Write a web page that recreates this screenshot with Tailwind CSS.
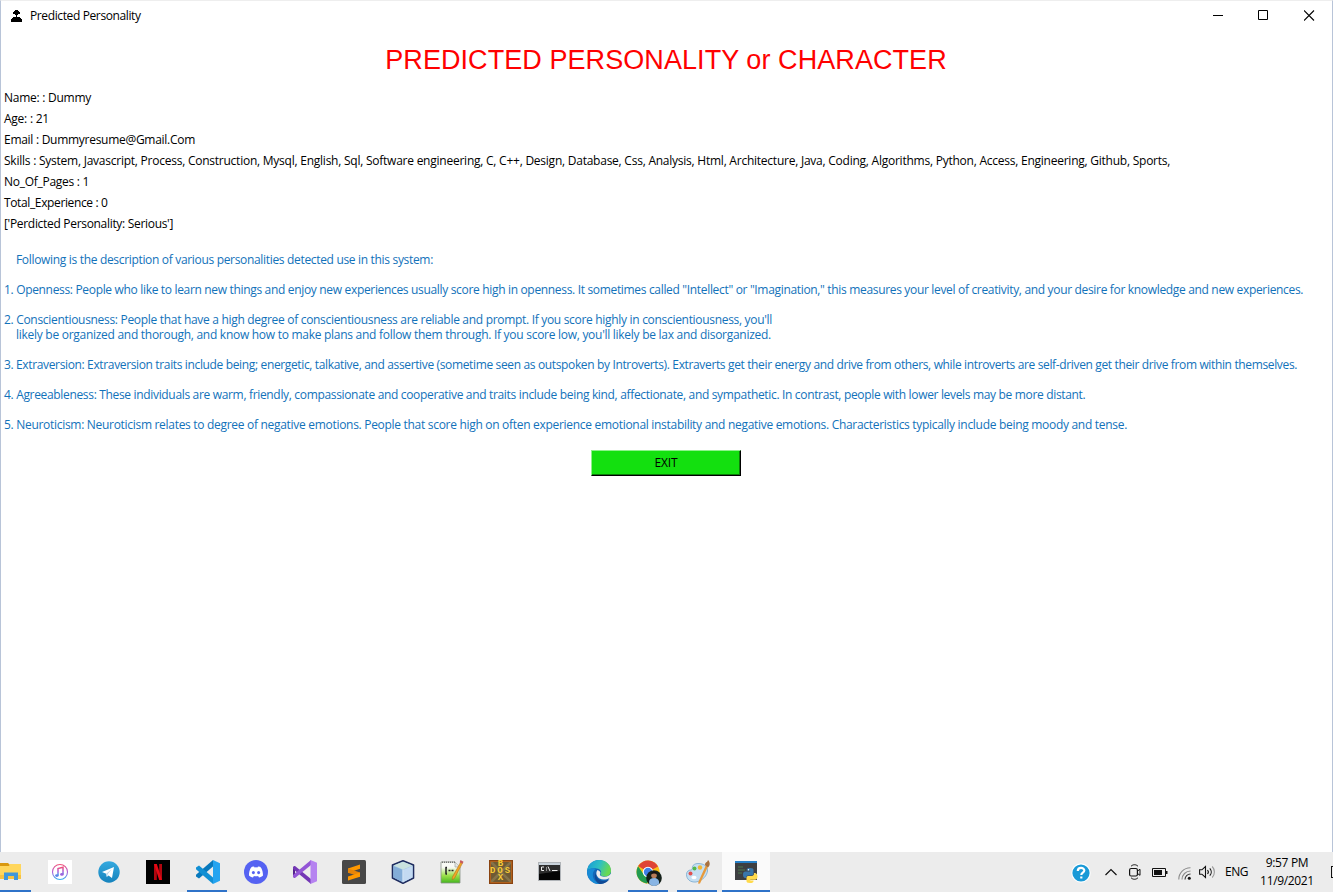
<!DOCTYPE html>
<html lang="en">
<head>
<meta charset="utf-8">
<title>Predicted Personality</title>
<script src="https://cdn.jsdelivr.net/npm/@tailwindcss/browser@4"></script>
</head>
<body class="w-[1333px] h-[892px] overflow-hidden bg-white font-['Open_Sans','Noto_Sans',sans-serif] text-[12px] text-black">
<div class="flex flex-col h-[892px]">
  <main class="flex flex-col h-[852px] border-t border-t-[#eee] border-x border-x-[#b8c4d8] whitespace-nowrap">
    <header class="flex items-center h-[30px] pl-[10px] shrink-0">
      <svg class="w-[11px] h-3 shrink-0 mb-px" viewBox="0 0 11 12" shape-rendering="crispEdges"><path d="M4 0h3v1h1v1h1v2H7v1H6v2h3v1h1v1h1v3H0V9h1V8h1V7h3V5H4V4H2V2h1V1h1z"/></svg>
      <span class="ml-2 tracking-[-0.38px]">Predicted Personality</span>
      <div class="flex items-center ml-auto mr-[17px] gap-[35px] mb-0.5">
        <svg class="w-[11px] h-[11px]" viewBox="0 0 11 11" fill="none" stroke="#000"><path d="M1 5.5h10"/></svg>
        <svg class="w-[11px] h-[11px]" viewBox="0 0 11 11" fill="none" stroke="#000"><path d="M.5.5h9v9h-9z"/></svg>
        <svg class="w-[11px] h-[11px]" viewBox="0 0 11 11" fill="none" stroke="#000" stroke-width="1.1"><path d="M0 .5l10 10M10 .5l-10 10"/></svg>
      </div>
    </header>
    <h1 class="mt-[11px] h-9 leading-9 shrink-0 pr-px text-center text-[27px] tracking-[0.07px] text-[#f00] font-['Liberation_Sans',sans-serif]">PREDICTED PERSONALITY or CHARACTER</h1>
    <section class="mt-[9px] pl-[3px] leading-[21px]">
      <p class="tracking-[-0.26px]">Name: : Dummy</p>
      <p class="tracking-[-0.24px]">Age: : 21</p>
      <p class="tracking-[-0.28px]">Email : Dummyresume@Gmail.Com</p>
      <p class="tracking-[-0.24px]">Skills : System, Javascript, Process, Construction, Mysql, English, Sql, Software engineering, C, C++, Design, Database, Css, Analysis, Html, Architecture, Java, Coding, Algorithms, Python, Access, Engineering, Github, Sports,</p>
      <p class="tracking-[-0.28px]">No_Of_Pages : 1</p>
      <p class="tracking-[-0.37px]">Total_Experience : 0</p>
      <p class="tracking-[-0.31px]">['Perdicted Personality: Serious']</p>
    </section>
    <section class="mt-[18px] pl-[3px] flex flex-col gap-[15px] leading-[15px] text-[#1272ba]">
      <p class="pl-3 tracking-[-0.323px]">Following is the description of various personalities detected use in this system:</p>
      <p class="tracking-[-0.327px]">1. Openness: People who like to learn new things and enjoy new experiences usually score high in openness. It sometimes called "Intellect" or "Imagination," this measures your level of creativity, and your desire for knowledge and new experiences.</p>
      <div>
        <p class="tracking-[-0.307px]">2. Conscientiousness: People that have a high degree of conscientiousness are reliable and prompt. If you score highly in conscientiousness, you'll</p>
        <p class="pl-3 tracking-[-0.277px]">likely be organized and thorough, and know how to make plans and follow them through. If you score low, you'll likely be lax and disorganized.</p>
      </div>
      <p class="tracking-[-0.356px]">3. Extraversion: Extraversion traits include being; energetic, talkative, and assertive (sometime seen as outspoken by Introverts). Extraverts get their energy and drive from others, while introverts are self-driven get their drive from within themselves.</p>
      <p class="tracking-[-0.33px]">4. Agreeableness: These individuals are warm, friendly, compassionate and cooperative and traits include being kind, affectionate, and sympathetic. In contrast, people with lower levels may be more distant.</p>
      <p class="tracking-[-0.298px]">5. Neuroticism: Neuroticism relates to degree of negative emotions. People that score high on often experience emotional instability and negative emotions. Characteristics typically include being moody and tense.</p>
    </section>
    <button class="mt-[18px] ml-[590px] w-[150px] h-[26px] shrink-0 bg-[#13e00f] border border-t-[#8cf28a] border-l-[#8cf28a] border-b-black border-r-black shadow-[inset_-1px_-1px_0_#0b7d09] leading-6 tracking-[-0.15px]">EXIT</button>
  </main>

  <footer class="flex h-10 shrink-0 bg-[#ececec]">
    <nav class="flex -ml-[14px] shrink-0">
      <div class="w-[45px] pl-[5px] flex justify-center items-center border-b-2 border-[#2f73c9]">
        <svg class="w-6 h-6 mt-0.5" viewBox="0 0 24 24"><path d="M1 3h8l2 2v3H1z" fill="#d9980f"/><path d="M1 6h9l1-2h11v15H1z" fill="#ffd65c"/><path d="M1 15h21v4H1z" fill="#f7c342"/><path d="M5 12.500h14V20h-4v-4H9v4H5z" fill="#3f97db"/></svg>
      </div>
      <div class="w-[49px] ml-1 flex justify-center items-center">
        <svg class="w-6 h-6 bg-white" viewBox="0 0 24 24" fill="none"><defs><linearGradient id="it" x1="0" y1="0" x2="0" y2="1"><stop stop-color="#f0527c"/><stop offset=".5" stop-color="#b05cd8"/><stop offset="1" stop-color="#35aef0"/></linearGradient></defs><circle cx="12" cy="12" r="7.500" stroke="url(#it)" stroke-width="1.100"/><path d="M10 15.500V8.500l5-1.200v7" stroke="url(#it)" stroke-width="1.500"/><ellipse cx="8.900" cy="15.600" rx="1.800" ry="1.400" fill="#5a86e8"/><ellipse cx="13.900" cy="14.400" rx="1.800" ry="1.400" fill="#9b62dc"/></svg>
      </div>
      <div class="w-[49px] flex justify-center items-center">
        <svg class="w-6 h-6" viewBox="0 0 24 24"><defs><linearGradient id="tg" x1="0" y1="0" x2="0" y2="1"><stop stop-color="#35a9df"/><stop offset="1" stop-color="#1583bd"/></linearGradient></defs><circle cx="12" cy="12" r="10.700" fill="url(#tg)"/><path d="M5 12l12-5-2 11-3.500-2.600-1.800 1.700-.5-3.400z" fill="#fff"/><path d="M9.200 13.700L14.800 9l-4 5-.6 2.500z" fill="#b8d6ea"/></svg>
      </div>
      <div class="w-[49px] flex justify-center items-center">
        <svg class="w-6 h-6 bg-black" viewBox="0 0 24 24"><path d="M8 4h2.800v16H8zM13.200 4H16v16h-2.800z" fill="#b1060f"/><path d="M8 4h2.800L16 20h-2.800z" fill="#e50914"/></svg>
      </div>
      <div class="w-[49px] flex justify-center items-center relative">
        <svg class="w-6 h-6 ml-0.5" viewBox="0 0 24 24"><path d="M17 0L24 3.200V20.800L17 24z" fill="#25a4f0"/><path d="M17 0v6.500L3 18.500 0 16.500v-1.800z" fill="#0879bd"/><path d="M17 24v-6.500L3 5.500 0 7.500v1.800z" fill="#118fd4"/></svg>
        <i class="absolute bottom-0 left-[5px] w-10 h-0.5 bg-[#2f73c9]"></i>
      </div>
      <div class="w-[49px] flex justify-center items-center">
        <svg class="w-6 h-6" viewBox="0 0 24 24"><circle cx="12" cy="12" r="12" fill="#5562f2"/><path d="M8 6.800l2-.4.6 1a10 10 0 0 1 2.800 0l.6-1 2 .4c1.600 1 3 4.500 3 8.600-1 1.100-2.500 1.800-4 2l-.9-1.500a8 8 0 0 1-4.200 0L9 17.400c-1.500-.2-3-.9-4-2 0-4.100 1.400-7.600 3-8.600z" fill="#fff"/><ellipse cx="9.400" cy="12.600" rx="1.500" ry="1.700" fill="#5562f2"/><ellipse cx="14.600" cy="12.600" rx="1.500" ry="1.700" fill="#5562f2"/></svg>
      </div>
      <div class="w-[49px] flex justify-center items-center">
        <svg class="w-6 h-6" viewBox="0 0 24 24"><path d="M0 7l2-1v12l-2-1z" fill="#52218a"/><path d="M2 6l16 13v5L0 9V7z" fill="#7337b5"/><path d="M2 18L18 5V0L0 15v2z" fill="#9355d6"/><path d="M17.500 0L24 2.800V21.200L17.500 24z" fill="#b683f0"/></svg>
      </div>
      <div class="w-[49px] flex justify-center items-center">
        <svg class="w-6 h-6" viewBox="0 0 24 24"><rect width="24" height="24" rx="1.500" fill="#474747"/><path d="M6 8.500L18 4.500v4.300L6 12.800z" fill="#ff9800"/><path d="M6 8.500l12 3.900v4.300L6 12.800z" fill="#e88508"/><path d="M6 16.400l12-4v4.300L6 20.500z" fill="#ff9800"/></svg>
      </div>
      <div class="w-[49px] flex justify-center items-center">
        <svg class="w-6 h-6" viewBox="0 0 24 24" stroke="#1d2b5e" stroke-linejoin="round"><path d="M12 .8L22.500 5v13L12 23.300 1.500 18V5z" fill="#a9c8e6" stroke-width="1.600"/><g stroke="none"><path d="M12 1.700L21.500 5.500 12 9.500 2.500 5.500z" fill="#c9e2df"/><path d="M2.400 6L11.500 9.800v12.300L2.400 17.500z" fill="#83add8"/><path d="M12.500 9.800L21.600 6v11.500l-9.100 4.600z" fill="#c3daf2"/></g><path d="M12 9.500v13" stroke="#eaf4ff" stroke-width=".8"/></svg>
      </div>
      <div class="w-[49px] flex justify-center items-center">
        <svg class="w-6 h-6" viewBox="0 0 24 24"><defs><linearGradient id="np" x1="0" y1="0" x2="0" y2="1"><stop offset=".25" stop-color="#f8faf5"/><stop offset=".65" stop-color="#9be04a"/><stop offset="1" stop-color="#43b51e"/></linearGradient></defs><path d="M1 2h14l5 5v16H1z" fill="url(#np)" stroke="#8a948a" stroke-width=".8"/><path d="M15 2v5h5" fill="#e4e7e4" stroke="#a4a8a4" stroke-width=".7"/><path d="M2 2.200h13" stroke="#777" stroke-width="1.500" stroke-dasharray="1 1"/><path d="M6 7v7M8.500 10.500h2M11.500 10.500h2M5.500 7.500H7M5.500 14H7" stroke="#222" stroke-width="1.500"/><path d="M21 1.500l1.800 1-8.300 15.800-2.300 1.500.2-2.700z" fill="#f0a627" stroke="#a96a18" stroke-width=".5"/><path d="M20.500 0l3 1.700-1.200 2-2.600-1.500z" fill="#c85a60"/></svg>
      </div>
      <div class="w-[49px] flex justify-center items-center">
        <div class="relative w-6 h-6 bg-[#6e5a34] border border-[#8a4310] font-['Liberation_Mono',monospace] font-bold text-[9px] leading-[7px] text-[#f7cb36] text-center">
          <svg class="absolute inset-0 w-full h-full" viewBox="0 0 22 22"><path d="M1 1l20 20M21 1L1 21" stroke="#85734a" stroke-width="2.500"/><path d="M.5.500h21v21H.5z" fill="none" stroke="#b0601c"/></svg>
          <div class="relative flex flex-col"><span>B</span><span class="tracking-[2px] -mr-[2px] -ml-px">DOS</span><span>X</span></div>
        </div>
      </div>
      <div class="w-[49px] flex justify-center items-center">
        <svg class="w-6 h-6" viewBox="0 0 24 24"><path d="M.5 2.500h22v18H.5z" fill="#050505" stroke="#b0b4b8"/><path d="M1 3h21v2H1z" fill="#c9d3dc"/><path d="M1 5h21v6L1 14z" fill="#2d2d2d"/><path d="M6 7H3.500v3.500H6M8.500 7.500v1M8.500 9.500v1M10 6.500l2 4.500M14 10.500h5.500" fill="none" stroke="#eee"/></svg>
      </div>
      <div class="w-[49px] flex justify-center items-center">
        <svg class="w-6 h-6" viewBox="0 0 24 24"><defs><linearGradient id="ed" x1="0" y1="0" x2="1" y2=".3"><stop stop-color="#1599d8"/><stop offset=".55" stop-color="#2dbfc4"/><stop offset="1" stop-color="#68d952"/></linearGradient></defs><circle cx="12" cy="12" r="12" fill="#1268b8"/><path d="M0 11C1 4 6 0 12 0c7 0 12 5 12 10.500 0 4-3 6-6 6-3.500 0-5-1.200-4.500-2.300 1.500-1.800.5-5.200-4-5.700C5 8 1.500 9 0 11z" fill="url(#ed)"/><path d="M0 11c2-2.500 6-3.500 9-2-4 2-4.500 9 0 12.500 1.500 1.300 3 2 5 2.300C6 25 0 19 0 11z" fill="#178ad6"/><path d="M10.500 10c-3 3.500 0 9.500 6 9.500 2.500 0 4.500-.5 6.500-1.800L24 19v-5.500c-1 2-3.500 3.200-6 3.200-3.500 0-5.500-1.200-5-2.500.9-1.300.5-3.200-2.500-4.200z" fill="#ececec"/><path d="M9 12.500c-1 4 2.500 8.500 8 8.500 2 0 4-.8 5.500-2-2 3.500-6 5.200-10 5C8 22 6.500 16 9 12.500z" fill="#104a96"/></svg>
      </div>
      <div class="w-[49px] ml-px flex justify-center items-center relative">
        <svg class="w-[26px] h-[26px] mt-0.5" viewBox="0 0 26 26"><circle cx="12" cy="12" r="11.500" fill="#fbc116"/><path d="M12 12L2.200 6A11.500 11.500 0 0 1 22 6.500z" fill="#df4435"/><path d="M2.100 6.200A11.500 11.500 0 0 0 11 23.500L15 16 7.500 14z" fill="#229b50"/><circle cx="12" cy="12" r="5.300" fill="#fff"/><circle cx="12" cy="12" r="4.200" fill="#3f7fe8"/><circle cx="18" cy="18" r="7.800" fill="#14201a"/><path d="M13.500 24.300c-1.500-4 1-6.300 4.500-6.300s6 2.500 4.800 6a7.800 7.800 0 0 1-9.300.3z" fill="#89b5e4"/><circle cx="18" cy="15.500" r="2.800" fill="#b77c58"/><path d="M15 14.500c0-4 6-4 6 0-1.500-1.300-4-1.300-6 0z" fill="#17110f"/></svg>
        <i class="absolute bottom-0 left-1 w-10 h-0.5 bg-[#2f73c9]"></i>
      </div>
      <div class="w-[49px] flex justify-center items-center relative">
        <svg class="w-6 h-6" viewBox="0 0 24 24"><path d="M12 3.500c6 0 10 3 9.500 7.500S17 20.500 10 22C4 22.500.5 19 .5 14.500c0-3 2-4.500 4.500-4.500 2 0 1-2 1.500-3.500S9 3.500 12 3.500z" fill="#c5dff2" stroke="#76a8cf" stroke-width=".8"/><circle cx="4.500" cy="13.500" r="2" fill="#e2504f"/><circle cx="8.500" cy="8.500" r="2" fill="#53b94c"/><circle cx="14" cy="7.500" r="2.200" fill="#f2b634"/><ellipse cx="8" cy="17.500" rx="2.600" ry="1.700" fill="#fff"/><path d="M20 5l2 1.500-8 17-1.800.3.200-2z" fill="#e79a3c"/><path d="M19 5c0-3 2.500-2.500 3-5 2 2 2.500 5 0 7.500z" fill="#a9713f"/></svg>
        <i class="absolute bottom-0 left-1 w-10 h-0.5 bg-[#2f73c9]"></i>
      </div>
      <div class="w-12 flex justify-center items-center bg-[#fafafa] border-b-2 border-[#2f73c9]">
        <svg class="w-[23px] h-6 mt-0.5" viewBox="0 0 23 24"><path d="M0 1h22v19H0z" fill="#3d3f42"/><path d="M0 1h22v2H0z" fill="#2680c8"/><path d="M3 7h5M3 10h7M3 13h4" stroke="#4a7a4a"/><path d="M15 8c3 0 3.500.8 3.500 2v3.500c0 1.500-.8 2-2.200 2h-3c-1.500 0-2 .8-2 2.500-3 .5-3.300-2-3.300-3.500 0-2 .8-3 2.500-3h4.700v-.7h-3.500V10c0-1.500 1-2 3.300-2z" fill="#3876aa"/><path d="M15 23c-3 0-3.500-.8-3.500-2v-3c0-1.500.8-2 2.200-2h3c1.500 0 2.300-.8 2.300-3 3 0 3.500 2 3.500 3.500 0 2-.8 3.200-2.500 3.200h-4.700v.7h3.200V21c0 1.500-1 2-3.500 2z" fill="#ffda4b"/><circle cx="13.500" cy="9.700" r=".7" fill="#fff"/></svg>
      </div>
    </nav>

    <div class="flex items-center ml-auto shrink-0 whitespace-nowrap">
      <svg class="w-5 h-5 mt-0.5" viewBox="0 0 20 20"><circle cx="10" cy="10" r="9.700" fill="#fff"/><circle cx="10" cy="10" r="8.600" fill="#1a9ad7"/><path d="M6.800 8c0-4 6.500-4 6.500-.4 0 2.200-3 2-3 4.400M10.300 13.500v2" fill="none" stroke="#fff" stroke-width="2.200"/></svg>
      <svg class="w-3 h-2 ml-[14px]" viewBox="0 0 12 8" fill="none" stroke="#111" stroke-width="1.200"><path d="M.5 7L6 1.500 11.500 7"/></svg>
      <svg class="w-3 h-4 ml-3" viewBox="0 0 12 16" fill="none" stroke="#111"><rect x=".6" y="4.500" width="7.800" height="7.500" rx="1.500" stroke-width="1.200"/><path d="M8.500 7l2.500-1.700v6L8.500 9.500M2 2.300C4 .2 7 .2 9 2.300M2 13.700c2 2.100 5 2.100 7 0"/></svg>
      <svg class="w-4 h-[9px] ml-[11px]" viewBox="0 0 16 9"><path d="M.5.500h13v8H.5z" fill="none" stroke="#111"/><path d="M2 2h8v5H2zM14 3h1.500v3H14z" fill="#111"/></svg>
      <svg class="w-[13px] h-[13px] ml-[10px] mt-0.5" viewBox="0 0 13 13" fill="none" stroke-width="1.100"><path d="M.8 12.500A11.500 11.500 0 0 1 12.500.8M4 12.500A8.500 8.500 0 0 1 12.500 4" stroke="#8c8c8c"/><path d="M7 12.500A5.500 5.500 0 0 1 12.500 7" stroke="#333"/><circle cx="11.300" cy="11.300" r="1.500" fill="#111"/></svg>
      <svg class="w-[18px] h-[14px] ml-2" viewBox="0 0 18 14" fill="none" stroke="#111" stroke-width="1.100"><path d="M.6 4.800h2.300L6.500 1.500v11L2.900 9.200H.6z"/><path d="M8.500 5a3 3 0 0 1 0 4M10.800 3.300a5.500 5.500 0 0 1 0 7.400"/><path d="M13.200 1.500a8 8 0 0 1 0 11" stroke="#999"/></svg>
      <span class="ml-2 w-[25px] tracking-[-0.45px]">ENG</span>
      <div class="w-[54px] ml-[10px] text-center leading-[18px] tracking-[-0.34px]"><div>9:57 PM</div><div>11/9/2021</div></div>
      <i class="w-[2px] h-3 ml-[17px] border border-r-0 border-[#111]"></i>
    </div>
  </footer>
</div>
</body>
</html>
